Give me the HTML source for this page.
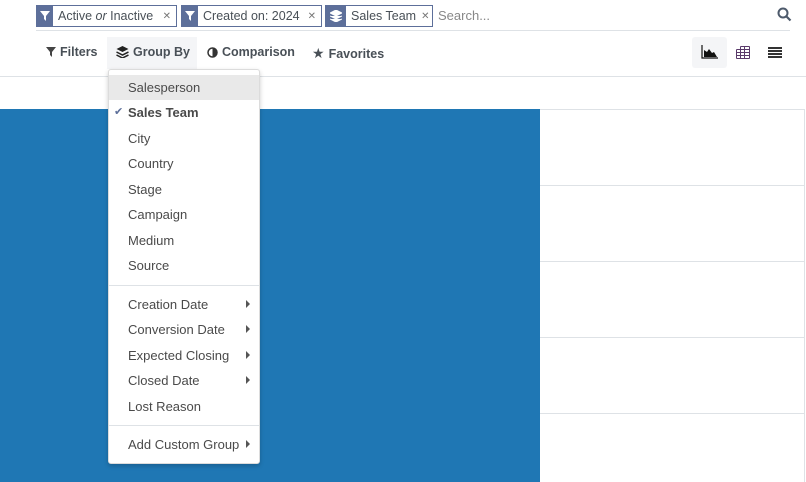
<!DOCTYPE html><html><head><style>
*{box-sizing:border-box;margin:0;padding:0}
body{width:806px;height:482px;overflow:hidden;background:#fff;font-family:"Liberation Sans","DejaVu Sans",sans-serif;font-size:13px;color:#495057;position:relative}
.a{position:absolute}
.facet{position:absolute;top:5px;height:22px;border:1px solid #5d6f9a;display:flex;align-items:center;background:#fff;white-space:nowrap;overflow:hidden}
.facet .ic{flex:none;width:16px;height:20px;background:#5d6f9a;display:flex;align-items:center;justify-content:center}
.facet span.t{padding:0 5px;color:#495057;font-size:12.5px;flex:1}
.facet .x{font-size:10px;color:#777;padding-right:5px}
.tb{position:absolute;top:45px;font-weight:bold;color:#495057;font-size:12.5px;display:flex;align-items:center;gap:4px;white-space:nowrap}
.mi{position:absolute;left:128px;height:20px;line-height:20px;color:#4a4a4a;font-size:13px}
.ar{position:absolute;left:246px;width:0;height:0;border-top:4px solid transparent;border-bottom:4px solid transparent;border-left:4px solid #555}
.hl{position:absolute;left:0;right:0;height:1px;background:#dee2e6}
</style></head><body>
<div class="facet" style="left:36px;width:141px"><div class="ic"><svg width="10" height="10" viewBox="0 0 10 10"><path d="M0 0h10L6 5v5L4 8V5z" fill="#fff"/></svg></div><span class="t">Active <i>or</i> Inactive</span><span class="x">✕</span></div>
<div class="facet" style="left:181px;width:141px"><div class="ic"><svg width="10" height="10" viewBox="0 0 10 10"><path d="M0 0h10L6 5v5L4 8V5z" fill="#fff"/></svg></div><span class="t">Created on: 2024</span><span class="x">✕</span></div>
<div class="facet" style="left:325px;width:108px"><div class="ic" style="width:20px"><svg width="12" height="12" viewBox="0 0 12 12"><path d="M6 0l6 3-6 3-6-3z M0 6l6 3 6-3 M0 9l6 3 6-3" fill="#fff" stroke="#fff" stroke-width="1"/></svg></div><span class="t">Sales Team</span><span class="x">✕</span></div>
<div class="a" style="left:438px;top:8px;color:#888">Search...</div>
<svg class="a" style="left:777px;top:7px" width="15" height="15" viewBox="0 0 15 15"><circle cx="6" cy="6" r="4.5" fill="none" stroke="#4d5a6b" stroke-width="2"/><path d="M9.5 9.5l4 4" stroke="#4d5a6b" stroke-width="2.2"/></svg>
<div class="a" style="left:36px;top:30px;width:754px;height:1px;background:#dee2e6"></div>
<div class="a" style="left:107px;top:37px;width:90px;height:32px;background:#f4f5f7"></div>
<div class="tb" style="left:46px"><svg width="10" height="10" viewBox="0 0 10 10"><path d="M0 0h10L6 5v5L4 8V5z" fill="#444"/></svg>Filters</div>
<div class="tb" style="left:116px"><svg width="13" height="12" viewBox="0 0 12 12"><path d="M6 0l6 3-6 3-6-3z" fill="#222"/><path d="M0 6l6 3 6-3M0 9l6 3 6-3" fill="none" stroke="#222" stroke-width="1.5"/></svg>Group By</div>
<div class="tb" style="left:207px"><svg width="11" height="11" viewBox="0 0 11 11"><circle cx="5.5" cy="5.5" r="4.5" fill="none" stroke="#333" stroke-width="1.5"/><path d="M5.5 1a4.5 4.5 0 0 1 0 9z" fill="#333"/></svg>Comparison</div>
<div class="tb" style="left:312px"><span style="font-size:14px">★</span>Favorites</div>
<div class="a" style="left:692px;top:37px;width:35px;height:31px;background:#f4f5f7;border-radius:3px"></div>
<svg class="a" style="left:701px;top:45px" width="17" height="14" viewBox="0 0 17 14"><path d="M1 0v13h16" stroke="#111" fill="none" stroke-width="1.2"/><path d="M3 12V5l3 2 2-3 3 4 2-1 3 5z" fill="#111"/></svg>
<svg class="a" style="left:736px;top:46px" width="14" height="13" viewBox="0 0 14 13"><path d="M0.5 3.5h13M0.5 6.5h13M0.5 9.5h13M0.5 12.5h13M0.5 3.5v9M4.5 0.5v12M8.5 0.5v12M13.5 0.5v12M4.5 0.5h9" stroke="#5a3a6a" fill="none"/></svg>
<svg class="a" style="left:768px;top:47px" width="14" height="11" viewBox="0 0 14 11"><path d="M0 1h14M0 4h14M0 7h14M0 10h14" stroke="#333" stroke-width="2"/></svg>
<div class="a" style="left:0;top:76px;width:806px;height:1px;background:#dee2e6"></div>
<div class="a" style="left:0;top:109px;width:540px;height:373px;background:#1f77b4"></div>
<div class="a" style="left:540px;top:109px;width:265px;height:373px;border-right:1px solid #dee2e6">
<div class="hl" style="top:0"></div><div class="hl" style="top:76px"></div><div class="hl" style="top:152px"></div><div class="hl" style="top:228px"></div><div class="hl" style="top:304px"></div></div>
<div class="a" style="left:108px;top:69px;width:152px;height:395px;background:#fff;border:1px solid #dcdcdc;border-radius:3px;box-shadow:0 2px 5px rgba(0,0,0,.2)"></div>
<div class="a" style="left:109px;top:75px;width:150px;height:25px;background:#e9e9e9"></div>
<div class="mi" style="top:78px">Salesperson</div>
<div class="a" style="left:114px;top:105px;color:#5d6f9a;font-size:11px">✔</div>
<div class="mi" style="top:103px;font-weight:bold">Sales Team</div>
<div class="mi" style="top:129px">City</div>
<div class="mi" style="top:154px">Country</div>
<div class="mi" style="top:180px">Stage</div>
<div class="mi" style="top:205px">Campaign</div>
<div class="mi" style="top:231px">Medium</div>
<div class="mi" style="top:256px">Source</div>
<div class="a" style="left:109px;top:285px;width:150px;height:1px;background:#dee2e6"></div>
<div class="mi" style="top:295px">Creation Date</div><div class="ar" style="top:300px"></div>
<div class="mi" style="top:320px">Conversion Date</div><div class="ar" style="top:325px"></div>
<div class="mi" style="top:346px">Expected Closing</div><div class="ar" style="top:351px"></div>
<div class="mi" style="top:371px">Closed Date</div><div class="ar" style="top:376px"></div>
<div class="mi" style="top:397px">Lost Reason</div>
<div class="a" style="left:109px;top:425px;width:150px;height:1px;background:#dee2e6"></div>
<div class="mi" style="top:435px">Add Custom Group</div><div class="ar" style="top:440px"></div>
</body></html>
